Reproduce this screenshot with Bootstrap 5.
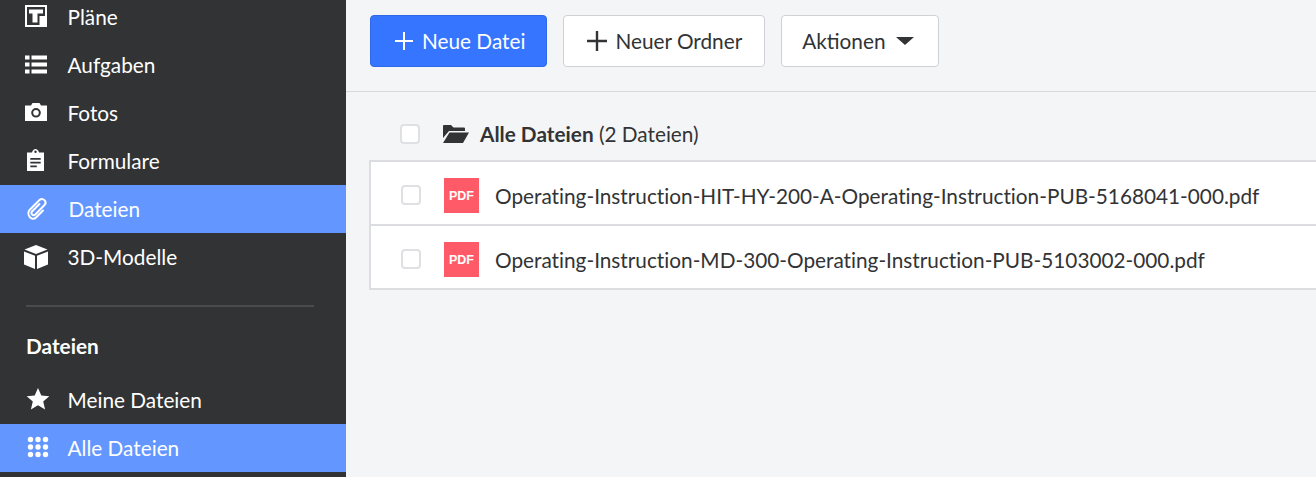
<!DOCTYPE html>
<html lang="de">
<head>
<meta charset="utf-8">
<title>Dateien</title>
<link href="https://cdn.jsdelivr.net/npm/bootstrap@5.3.0/dist/css/bootstrap.min.css" rel="stylesheet">
<style>
html,body{height:477px;overflow:hidden}
body{font-family:"Lato","Liberation Sans",sans-serif;font-size:20.78px;background:#f4f5f7;color:#323335;font-variant-ligatures:none}
.shell{height:477px}
.side{width:346px;flex:none;background:#323335;color:#fff;overflow:hidden}
.side-list{margin-top:-7px}
.side-item{height:48px;color:#fff;text-decoration:none;padding:0 0 0 24px}
.side-item.on{background:#6397ff}
.side-ico{width:26px;height:26px;flex:none;margin:0 17.5px 0 0;fill:#fff}
.side-rule{height:2px;background:#4a4b4d;margin:24px 32px 0 26px}
.side-head{font-weight:700;margin:25px 0 0 26px;height:27px;line-height:27px}
.side-gap{height:17px}
.main{min-width:0;flex:1}
.bar{height:92px;padding:15px 0 0 24px;border-bottom:1px solid #d8d9dc;gap:16px}
.tbtn{height:52px;font-size:20.78px;line-height:1;padding:0 22px 0 22px;border-radius:4px;background:#fff;border:1px solid #cfd1d5;color:#323335;display:flex;align-items:center}
.tbtn:hover{background:#fff;color:#323335;border-color:#cfd1d5}
.tbtn.blue,.tbtn.blue:hover{background:#3575ff;border-color:#2f68e6;color:#fff;padding:0 21px 0 23px}
.tbtn.menu-btn{padding:0 24px 0 20px}
.plus-a{width:20px;height:20px;margin-right:8px;flex:none}
.plus-b{width:22px;height:22px;margin-right:7px;flex:none}
.caret-ico{width:0;height:0;border-left:9px solid transparent;border-right:9px solid transparent;border-top:8px solid #323335;margin-left:11px}
.tree-head{height:68px;padding:16px 0 0 54px;color:#323335}
.fbox{width:20px;height:20px;flex:none;border:2px solid #dfe0e3;border-radius:4px;background:#fff}
.head-folder{width:26px;height:22px;margin:0 11px 0 23px;flex:none}
.flist{margin-left:23px;border:2px solid #dcdde0;border-right:0;background:#fff}
.frow{height:62px;padding:16px 0 0 30px}
.frow+.frow{border-top:2px solid #dcdde0;height:64px}
.frow .fbox{margin-top:7px}
.ftext{line-height:36px}
.pdf{width:35px;height:35px;flex:none;background:#ff5a67;color:#fff;font:700 12.5px "Liberation Sans",sans-serif;display:flex;align-items:center;justify-content:center;margin:0 16px 0 23px}
</style>
</head>
<body>
<div class="shell d-flex">
  <nav class="side">
    <div class="side-list">
      <a class="side-item d-flex align-items-center" href="#"><svg class="side-ico" viewBox="0 0 26 26"><path fill-rule="evenodd" d="M1 1H23V23H1ZM3 3V21H15.500V12H21V3ZM5 5.500H19V9.500H13.500V18.500H8.500V9.500H5Z"/></svg>Pläne</a>
      <a class="side-item d-flex align-items-center" href="#"><svg class="side-ico" viewBox="0 0 26 26"><path d="M1 3.500h4.500v4H1zM7.500 3.500H23v4H7.500zM1 10.500h4.500v4H1zM7.500 10.500H23v4H7.500zM1 17.500h4.500v4H1zM7.500 17.500H23v4H7.500z"/></svg>Aufgaben</a>
      <a class="side-item d-flex align-items-center" href="#"><svg class="side-ico" viewBox="0 0 26 26"><path fill-rule="evenodd" d="M1 5.500h6L8.500 3h7L17 5.500h6V21H1zM12 8a4.800 4.800 0 1 0 0 9.600A4.800 4.800 0 0 0 12 8zM12 10a2.800 2.800 0 1 1 0 5.600A2.800 2.800 0 0 1 12 10z"/></svg>Fotos</a>
      <a class="side-item d-flex align-items-center" href="#"><svg class="side-ico" viewBox="0 0 26 26"><path fill-rule="evenodd" d="M3 4.500h5C8.500 2.500 10 1 11.500 1S14.500 2.500 15 4.500h5V23H3zM11.500 2.600a1.200 1.200 0 1 0 0 2.400 1.200 1.200 0 0 0 0-2.400zM6.300 10v1.700h10.400V10zM6.300 13.700v1.700h10.400v-1.700zM6.300 17.500v1.700h6.500v-1.700z"/></svg>Formulare</a>
      <a class="side-item on d-flex align-items-center" href="#"><svg class="side-ico" viewBox="0 0 26 26" style="fill:none;stroke:#fff;stroke-width:2;stroke-linecap:round"><path d="M15.500 8 8 15.500c-2 2.200 1.200 5 3.300 3L20.500 9c3-3.200-1.500-8-5-5L6 13.500C1.500 18 7.500 26 12 21.500l7-7"/></svg><span style="margin-left:1px">Dateien</span></a>
      <a class="side-item d-flex align-items-center" href="#"><svg class="side-ico" viewBox="0 0 26 26"><path d="M12 1 23.500 5.500 12 10 .5 5.500zM0 7.500l11 4.300V25L0 20.500zM24 7.500 13 11.800V25l11-4.500z"/></svg>3D-Modelle</a>
    </div>
    <div class="side-rule"></div>
    <div class="side-head">Dateien</div>
    <div class="side-gap"></div>
    <a class="side-item d-flex align-items-center" href="#"><svg class="side-ico" viewBox="0 0 26 26"><path d="M14 1l3.300 7.600 8 .7-6.100 5.300 1.900 8L14 18.300l-7.100 4.300 1.900-8L2.700 9.300l8-.7z"/></svg>Meine Dateien</a>
    <a class="side-item on d-flex align-items-center" href="#"><svg class="side-ico" viewBox="0 0 26 26"><circle cx="6.500" cy="4.500" r="2.700"/><circle cx="14" cy="4.500" r="2.700"/><circle cx="21.500" cy="4.500" r="2.700"/><circle cx="6.500" cy="12" r="2.700"/><circle cx="14" cy="12" r="2.700"/><circle cx="21.500" cy="12" r="2.700"/><circle cx="6.500" cy="19.500" r="2.700"/><circle cx="14" cy="19.500" r="2.700"/><circle cx="21.500" cy="19.500" r="2.700"/></svg>Alle Dateien</a>
  </nav>
  <main class="main">
    <div class="bar d-flex align-items-start">
      <button class="btn tbtn blue" type="button"><svg class="plus-a" viewBox="0 0 20 20"><path d="M9 1h2v8h8v2h-8v8H9v-8H1V9h8z" fill="#fff"/></svg>Neue Datei</button>
      <button class="btn tbtn" type="button"><svg class="plus-b" viewBox="0 0 22 22"><path d="M9.800 1h2.400v8.800H21v2.400h-8.800V21H9.800v-8.800H1V9.800h8.800z" fill="#323335"/></svg>Neuer Ordner</button>
      <button class="btn tbtn menu-btn" type="button">Aktionen<span class="caret-ico"></span></button>
    </div>
    <div class="tree-head d-flex align-items-center">
      <span class="fbox"></span>
      <svg class="head-folder" viewBox="0 0 26 22"><path d="M0 3a1 1 0 0 1 1-1h7l2.500 2.500H21a1 1 0 0 1 1 1V8H6L0 15z" fill="#323335"/><path d="M6.500 9.500H26L20 20H0z" fill="#323335"/></svg>
      <span><b>Alle Dateien</b> (2 Dateien)</span>
    </div>
    <div class="flist">
      <div class="frow d-flex align-items-start"><span class="fbox"></span><span class="pdf">PDF</span><span class="ftext">Operating-Instruction-HIT-HY-200-A-Operating-Instruction-PUB-5168041-000.pdf</span></div>
      <div class="frow d-flex align-items-start"><span class="fbox"></span><span class="pdf">PDF</span><span class="ftext">Operating-Instruction-MD-300-Operating-Instruction-PUB-5103002-000.pdf</span></div>
    </div>
  </main>
</div>
<script src="https://cdn.jsdelivr.net/npm/bootstrap@5.3.0/dist/js/bootstrap.bundle.min.js"></script>
</body>
</html>
